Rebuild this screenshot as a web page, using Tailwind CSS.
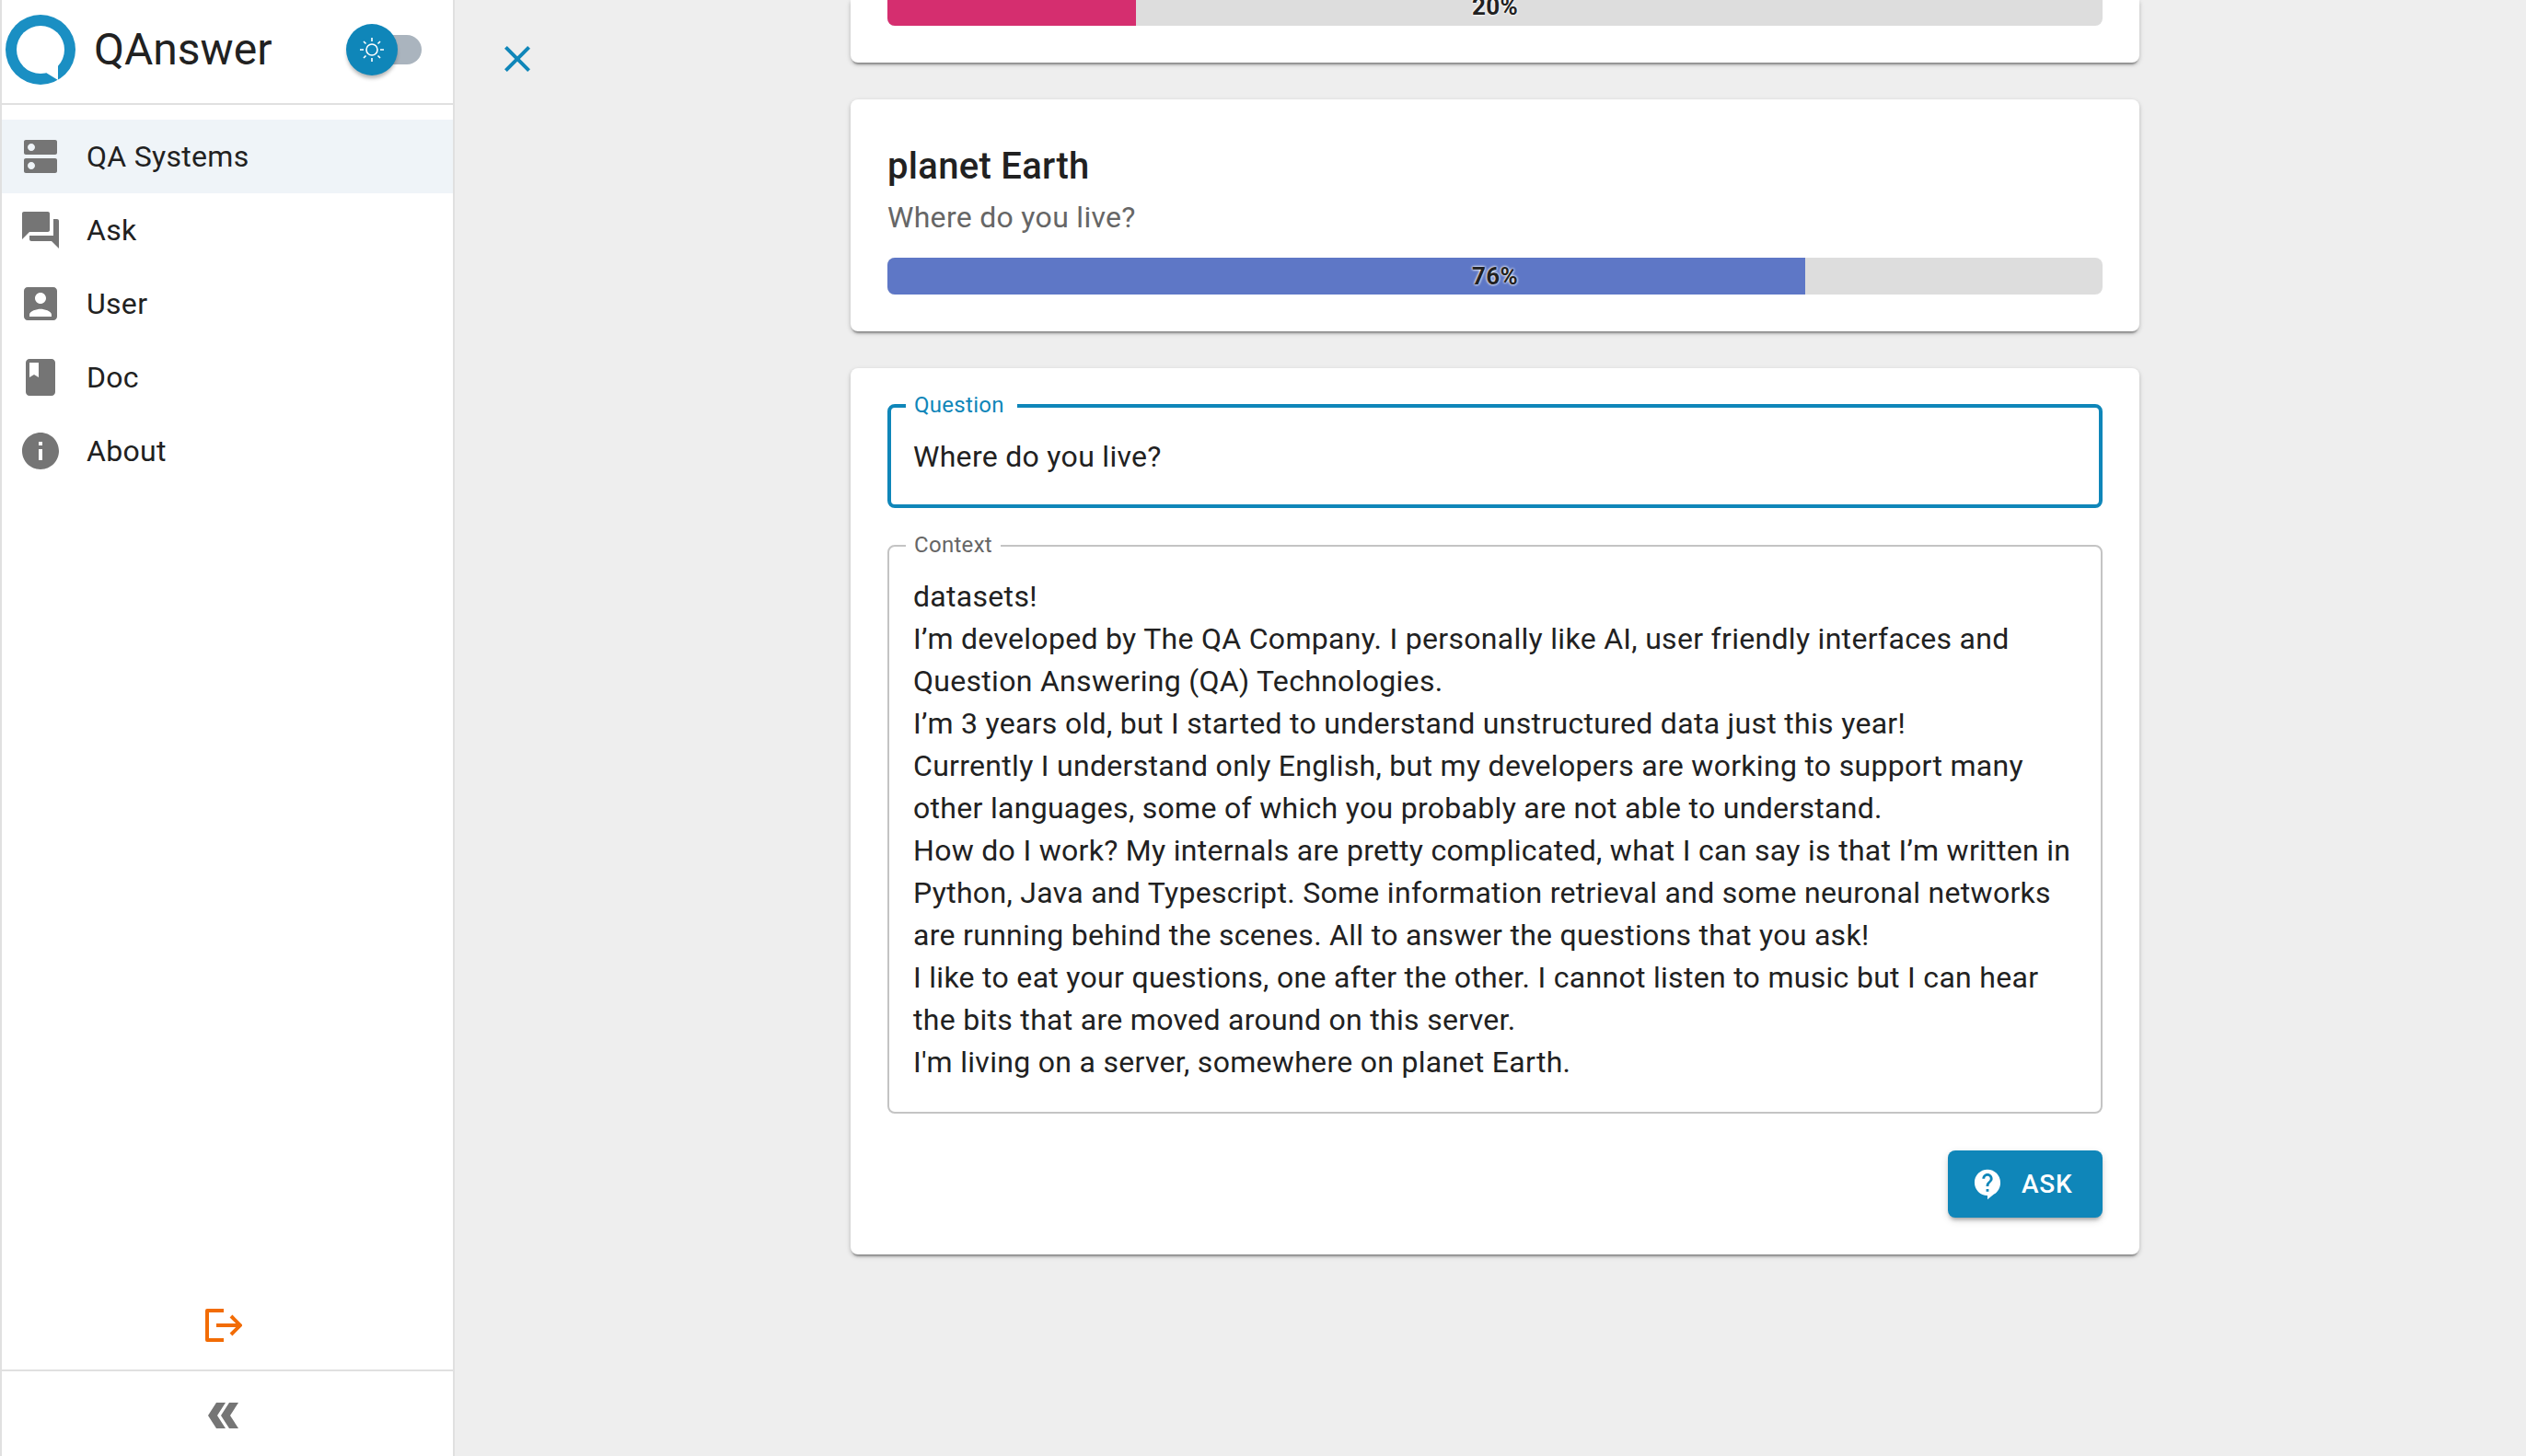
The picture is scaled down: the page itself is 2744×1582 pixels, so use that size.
<!doctype html>
<html>
<head>
<meta charset="utf-8">
<script src="https://cdn.jsdelivr.net/npm/@tailwindcss/browser@4"></script>
</head>
<body class="m-0 overflow-hidden bg-[#eeeeee] font-['Roboto',sans-serif] text-[#212121]">
<div class="flex h-[1582px] w-[2744px]">
  <aside class="flex h-full w-[494px] shrink-0 flex-col border-x-2 border-[#e0e0e0] bg-white">
    <div class="flex h-[114px] shrink-0 items-start border-b-2 border-[#e0e0e0]">
      <svg class="mt-[16px] ml-[4px] shrink-0" width="76" height="76" viewBox="0 0 76 76">
        <ellipse cx="38" cy="38" rx="38" ry="38" fill="#1a8fc3"/>
        <path d="M38 12a26 26 0 1 1 0 52a26 26 0 0 1 0-52z" fill="#fff"/>
        <path d="M44 63l13 8V52z" fill="#fff"/>
      </svg>
      <div class="mt-[22px] ml-[20px] w-[288px] text-[48px] leading-[64px]">QAnswer</div>
      <div class="relative mt-[38px] h-[32px] w-[68px] rounded-full bg-[#aab4be]">
        <div class="absolute top-[-12px] left-[-14px] flex h-[56px] w-[56px] items-center justify-center rounded-full bg-[#0f86b9] shadow-[0_4px_4px_-1px_rgba(0,0,0,0.3)]">
          <svg width="26" height="26" viewBox="0 0 26 26" fill="none" stroke="#fff" stroke-width="1.6">
            <circle cx="13" cy="13" r="6"/>
            <path d="M13 0v4M13 22v4M0 13h4M22 13h4M4 4l2.5 2.500M19.500 19.500l2.500 2.500M4 22l2.500-2.500M19.500 6.500l2.500-2.500"/>
          </svg>
        </div>
      </div>
    </div>
    <nav class="flex flex-col pt-4 text-[32px] tracking-[0.3px]">
      <a class="flex h-[80px] items-center gap-[26px] bg-[#eff4f8] pl-[18px]">
        <svg width="48" height="48" viewBox="0 0 24 24" fill="#757575"><path d="M20 13H4c-.55 0-1 .45-1 1v6c0 .55.45 1 1 1h16c.55 0 1-.45 1-1v-6c0-.55-.45-1-1-1zM7 19c-1.1 0-2-.9-2-2s.9-2 2-2 2 .9 2 2-.9 2-2 2zM20 3H4c-.55 0-1 .45-1 1v6c0 .55.45 1 1 1h16c.55 0 1-.45 1-1V4c0-.55-.45-1-1-1zM7 9c-1.1 0-2-.9-2-2s.9-2 2-2 2 .9 2 2-.9 2-2 2z"/></svg>
        <span>QA Systems</span>
      </a>
      <a class="flex h-[80px] items-center gap-[26px] pl-[18px]">
        <svg width="48" height="48" viewBox="0 0 24 24" fill="#757575"><path d="M21 6h-2v9H6v2c0 .55.45 1 1 1h11l4 4V7c0-.55-.45-1-1-1zm-4 6V3c0-.55-.45-1-1-1H3c-.55 0-1 .45-1 1v14l4-4h10c.55 0 1-.45 1-1z"/></svg>
        <span>Ask</span>
      </a>
      <a class="flex h-[80px] items-center gap-[26px] pl-[18px]">
        <svg width="48" height="48" viewBox="0 0 24 24" fill="#757575"><path d="M19 3H5c-1.11 0-2 .9-2 2v14c0 1.1.89 2 2 2h14c1.1 0 2-.9 2-2V5c0-1.1-.9-2-2-2zm-7 3c1.65 0 3 1.35 3 3s-1.35 3-3 3-3-1.35-3-3 1.35-3 3-3zm6 13H6v-1c0-2 4-3.1 6-3.1s6 1.1 6 3.1v1z"/></svg>
        <span>User</span>
      </a>
      <a class="flex h-[80px] items-center gap-[26px] pl-[18px]">
        <svg width="48" height="48" viewBox="0 0 24 24" fill="#757575"><path d="M18 2H6c-1.1 0-2 .9-2 2v16c0 1.1.9 2 2 2h12c1.1 0 2-.9 2-2V4c0-1.1-.9-2-2-2zM6 4h5v8l-2.5-1.5L6 12V4z"/></svg>
        <span>Doc</span>
      </a>
      <a class="flex h-[80px] items-center gap-[26px] pl-[18px]">
        <svg width="48" height="48" viewBox="0 0 24 24" fill="#757575"><path d="M12 2C6.48 2 2 6.48 2 12s4.48 10 10 10 10-4.48 10-10S17.52 2 12 2zm1 15h-2v-6h2v6zm0-8h-2V7h2v2z"/></svg>
        <span>About</span>
      </a>
    </nav>
    <div class="flex-1"></div>
    <div class="flex h-[70px] shrink-0 items-start pt-[4px] pl-[221px]">
      <svg width="40" height="36" viewBox="0 0 40 36" fill="none" stroke="#f26c05">
        <path d="M20 2H2v32h18" stroke-width="4" stroke-linejoin="round"/>
        <path d="M12 18h25" stroke-width="4"/>
        <path d="M28 8l10 10l-10 10" stroke-width="4"/>
      </svg>
    </div>
    <div class="flex h-[94px] shrink-0 items-start border-t-2 border-[#e0e0e0] pt-[34px] pl-[224px]">
      <svg width="33" height="28" viewBox="0 0 33 28" fill="#757575"><path d="M0 14L9 0h10l-9 14l9 14H9zM14 14L23 0h10l-9 14l9 14H23z"/></svg>
    </div>
  </aside>

  <div class="w-[430px] shrink-0 pt-[40px] pl-[44px]">
    <svg width="48" height="48" viewBox="0 0 24 24" fill="#0f86b9"><path d="M19 6.41 17.59 5 12 10.59 6.41 5 5 6.41 10.59 12 5 17.59 6.41 19 12 13.41 17.59 19 19 17.59 13.41 12z"/></svg>
  </div>

  <main class="flex w-[1400px] shrink-0 flex-col gap-[40px] tracking-[0.3px]">
    <section class="h-[68px] rounded-b-[8px] bg-white px-[40px] shadow-[0_4px_2px_-2px_rgba(0,0,0,0.3),0_2px_4px_0_rgba(0,0,0,0.14),0_2px_6px_0_rgba(0,0,0,0.1)]">
      <div class="relative flex h-[28px] items-end overflow-hidden rounded-b-[8px] bg-[#dddddd]">
        <div class="h-full w-[270px] bg-[#d52e6f]"></div>
        <div class="absolute inset-x-0 bottom-[6px] text-center text-[26px] leading-[30px] font-bold [text-shadow:0_0_3px_#fff,0_0_3px_#fff]">20%</div>
      </div>
    </section>

    <section class="h-[252px] rounded-[8px] bg-white px-[40px] pt-[45px] shadow-[0_4px_2px_-2px_rgba(0,0,0,0.3),0_2px_4px_0_rgba(0,0,0,0.14),0_2px_6px_0_rgba(0,0,0,0.1)]">
      <h2 class="text-[40px] leading-[56px] font-medium">planet Earth</h2>
      <p class="mt-[4px] text-[32px] leading-[46px] text-[#666666]">Where do you live?</p>
      <div class="relative mt-[21px] flex h-[40px] overflow-hidden rounded-[8px] bg-[#dddddd]">
        <div class="h-full w-[997px] bg-[#5e77c6]"></div>
        <div class="absolute inset-x-0 top-[4px] text-center text-[26px] leading-[32px] font-bold [text-shadow:0_0_3px_#fff,0_0_3px_#fff]">76%</div>
      </div>
    </section>

    <section class="h-[963px] rounded-[8px] bg-white px-[40px] pt-[39px] shadow-[0_4px_2px_-2px_rgba(0,0,0,0.3),0_2px_4px_0_rgba(0,0,0,0.14),0_2px_6px_0_rgba(0,0,0,0.1)]">
      <div class="relative h-[113px] rounded-[8px] border-4 border-[#0f86b9] pt-[30px] pl-[24px] text-[32px] leading-[46px]">
        <span class="absolute top-[-19px] left-[16px] bg-white pr-[14px] pl-[9px] text-[24px] leading-[32px] text-[#0f86b9]">Question</span>
        Where do you live?
      </div>
      <div class="relative mt-[40px] h-[618px] rounded-[8px] border-2 border-[#c4c4c4] pt-[31px] pl-[26px] text-[32px] leading-[46px]">
        <span class="absolute top-[-18px] left-[18px] bg-white px-[9px] text-[24px] leading-[32px] text-[#666666]">Context</span>
        <p>datasets!<br>I’m developed by The QA Company. I personally like AI, user friendly interfaces and<br>Question Answering (QA) Technologies.<br>I’m 3 years old, but I started to understand unstructured data just this year!<br>Currently I understand only English, but my developers are working to support many<br>other languages, some of which you probably are not able to understand.<br>How do I work? My internals are pretty complicated, what I can say is that I’m written in<br>Python, Java and Typescript. Some information retrieval and some neuronal networks<br>are running behind the scenes. All to answer the questions that you ask!<br>I like to eat your questions, one after the other. I cannot listen to music but I can hear<br>the bits that are moved around on this server.<br>I'm living on a server, somewhere on planet Earth.</p>
      </div>
      <div class="mt-[40px] flex justify-end">
        <button class="flex h-[73px] w-[168px] items-center gap-[20px] rounded-[8px] bg-[#0f86b9] pl-[26px] text-[28px] font-medium tracking-[0.8px] text-white shadow-[0_4px_4px_-2px_rgba(0,0,0,0.3),0_3px_8px_0_rgba(0,0,0,0.14)]">
          <svg width="34" height="38" viewBox="0 0 24 27" fill="#fff"><path d="M12 2C6.48 2 2 6.48 2 12s4.48 10 10 10c0 0 0 3 0 3l5-4c3-1.7 5-5 5-9C22 6.48 17.52 2 12 2zm1 17h-2v-2h2v2zm2.07-7.75l-.9.92C13.45 12.9 13 13.5 13 15h-2v-.5c0-1.1.45-2.1 1.17-2.83l1.24-1.26c.37-.36.59-.86.59-1.41 0-1.1-.9-2-2-2s-2 .9-2 2H8c0-2.21 1.79-4 4-4s4 1.79 4 4c0 .88-.36 1.68-.93 2.25z"/></svg>
          <span>ASK</span>
        </button>
      </div>
    </section>
  </main>
</div>
</body>
</html>
